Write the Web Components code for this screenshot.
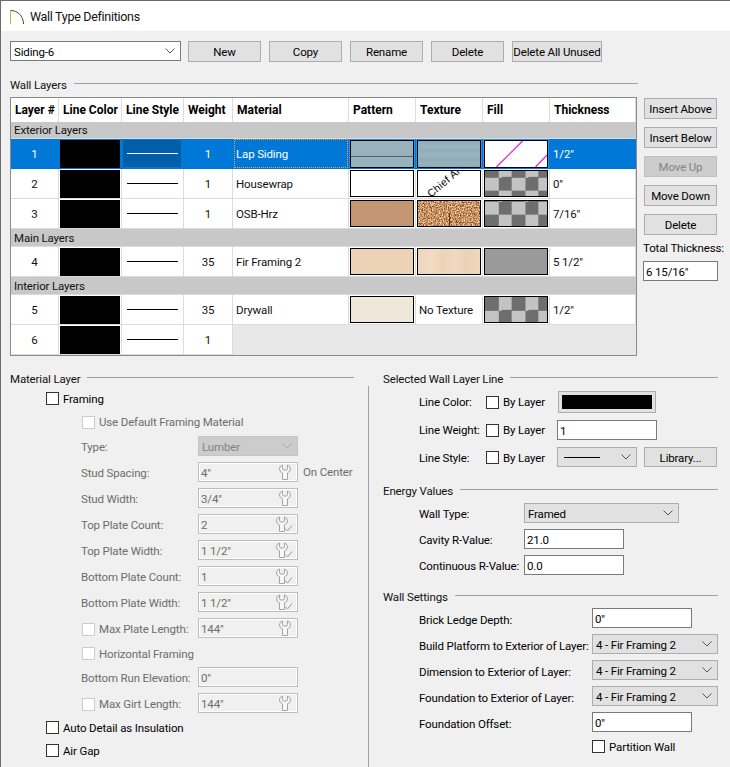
<!DOCTYPE html>
<html><head><meta charset="utf-8">
<style>
html,body{margin:0;padding:0;background:#f0f0f0;overflow:hidden}
body{font:11.5px/15px Roboto,"Liberation Sans",sans-serif;letter-spacing:-.15px;color:#000}
</style></head><body>
<wt-window>
  <wt-titlebar slot="title">Wall Type Definitions</wt-titlebar>
  <wt-toolbar slot="toolbar">
    <wt-select variant="white" w="171" text="Siding-6"></wt-select>
    <wt-button w="73">New</wt-button><wt-button w="73">Copy</wt-button><wt-button w="73">Rename</wt-button><wt-button w="73">Delete</wt-button><wt-button w="90">Delete All Unused</wt-button>
  </wt-toolbar>
  <wt-group slot="layers-head" label="Wall Layers"></wt-group>
  <wt-layer-table slot="table"></wt-layer-table>
  <wt-side slot="side">
    <wt-button w="73" h="21">Insert Above</wt-button>
    <wt-button w="73" h="21">Insert Below</wt-button>
    <wt-button w="73" h="21" disabled>Move Up</wt-button>
    <wt-button w="73" h="21">Move Down</wt-button>
    <wt-button w="73" h="21">Delete</wt-button>
    <span slot="total" style="white-space:nowrap">Total Thickness:</span>
    <wt-input slot="total" w="75" value='6 15/16"'></wt-input>
  </wt-side>
  <wt-material slot="left"></wt-material>
  <wt-right slot="right"></wt-right>
</wt-window>
<script>
function def(name, css, html, init){
  customElements.define(name, class extends HTMLElement{
    constructor(){super();const r=this.attachShadow({mode:'open'});r.innerHTML='<style>'+css+'</style>'+(typeof html==='function'?html(this):html);}
    connectedCallback(){ if(init&&!this._i){this._i=1;init(this);} }
  });
}
const chev=c=>`<svg width="10" height="6" viewBox="0 0 10 6"><path d="M.5 .5 5 5 9.500 .5" fill="none" stroke="${c}"/></svg>`;
const WR='M3.500 1v3.600Q3.500 6 5 6H7Q8.500 6 8.500 4.600V1Q11.500 2 11.500 5Q11.500 7.800 8.500 8.800V15.500H3.500V8.800Q.5 7.800 .5 5Q.5 2 3.500 1Z';

def('wt-window',`:host{display:block;width:730px;height:767px;box-sizing:border-box;border-left:1px solid #6b6b6b;border-top:1px solid #6b6b6b;background:#f0f0f0;overflow:hidden}
.top{padding:10px 0 0 9px}.head{margin-top:15px;padding-right:92px}
.mid{display:flex;gap:6px;margin-top:4px;padding-left:9px}
.low{display:grid;grid-template-columns:367px 1fr;margin-top:15px;height:396px}`,
`<slot name="title"></slot><div class="top"><slot name="toolbar"></slot><div class="head"><slot name="layers-head"></slot></div></div>
<div class="mid"><slot name="table"></slot><slot name="side"></slot></div>
<div class="low"><slot name="left"></slot><slot name="right"></slot></div>`);

def('wt-titlebar',`:host{display:flex;align-items:center;gap:5px;height:30px;background:#fff;padding-left:9px;font-size:12.500px;letter-spacing:-.3px;color:#111}
svg{display:block;margin-top:1px}`,
`<svg width="15" height="16" viewBox="0 0 15 16"><path d="M1 1.500C7.500 1.500 13.500 7 13.500 15" fill="none" stroke="#444"/><path d="M.5 1V15" stroke="#a8c83c" fill="none"/></svg><slot></slot>`);

def('wt-toolbar',`:host{display:flex;gap:8px;align-items:flex-start;height:21px}::slotted(wt-select){margin-right:-1px}`,`<slot></slot>`);

def('wt-button',`:host{display:inline-flex;align-items:center;justify-content:center;box-sizing:border-box;height:var(--h,21px);width:var(--w,73px);background:#e1e1e1;border:1px solid #adadad;white-space:nowrap;flex:none;padding-top:2px}
:host([disabled]){background:#cdcdcd;border-color:#c0c0c0;color:#838383}`,`<slot></slot>`,
e=>{e.style.setProperty('--w',(e.getAttribute('w')||73)+'px');e.style.setProperty('--h',(e.getAttribute('h')||21)+'px');});

def('wt-select',`:host{display:flex;align-items:center;justify-content:space-between;box-sizing:border-box;height:20px;background:#e1e1e1;border:1px solid #adadad;padding:0 5px 0 3px;white-space:nowrap;flex:none}
:host([variant=white]){background:#fff;border-color:#7a7a7a}
:host([disabled]){background:#cccccc;border-color:#c4c4c4;color:#838383}
span{padding-top:3px}
svg{display:block}`,
e=>`<span id="t"></span>`+chev(e.hasAttribute('disabled')?'#a8a8a8':'#555'),
e=>{e.shadowRoot.getElementById('t').textContent=e.getAttribute('text');e.style.width=e.getAttribute('w')+'px';});

def('wt-input',`:host{display:flex;align-items:center;justify-content:space-between;box-sizing:border-box;height:20px;background:#fff;border:1px solid #7a7a7a;padding:0 4px 0 2px;white-space:nowrap;flex:none;color:#000}
:host([disabled]){background:#f0f0f0;border-color:#bcbcbc;color:#6d6d6d;box-shadow:inset 0 0 0 1px #fff}
span{padding-top:3px}
svg{display:block;flex:none}`,
`<span id="t"></span><svg id="i" width="17" height="16" viewBox="0 0 17 16" style="display:none"></svg>`,
e=>{e.shadowRoot.getElementById('t').textContent=e.getAttribute('value');e.style.width=e.getAttribute('w')+'px';
 const k=e.getAttribute('icon');const s=e.shadowRoot.getElementById('i');
 if(k){s.style.display='block';
  s.innerHTML=k==='check'
   ?`<path d="${WR}" fill="#f7f7f7" stroke="#a4a4a4"/><path d="M9 12.500 11.500 15 16 9.500" fill="none" stroke="#9a9a9a"/>`
   :`<path d="${WR}" transform="translate(3 0)" fill="#f7f7f7" stroke="#a4a4a4"/>`;}
});

def('wt-check',`:host{display:inline-flex;align-items:center;gap:4px;white-space:nowrap;color:#000}
i{display:block;box-sizing:border-box;width:13px;height:13px;border:1px solid #333;background:#fff;flex:none}
span{padding-top:var(--tp,2px)}
:host([disabled]){color:#6d6d6d}:host([disabled]) i{border-color:#ccc}`,`<i></i><span><slot></slot></span>`);

def('wt-group',`:host{display:flex;height:16px;gap:7px;white-space:nowrap;color:#111}
i{display:block;flex:1;height:1px;background:#a0a0a0;margin-top:6px}span{line-height:16px}`,
e=>`<span id="l"></span><i></i>`,e=>{e.shadowRoot.getElementById('l').textContent=e.getAttribute('label');});

def('wt-side',`:host{display:flex;flex-direction:column;width:75px;padding-top:1px;flex:none}
.b{display:flex;flex-direction:column;gap:8px;padding-left:1px}.t{display:flex;flex-direction:column;gap:5px;margin-top:6px}`,
`<div class="b"><slot></slot></div><div class="t"><slot name="total"></slot></div>`);

def('wt-swatch',`:host{display:block;box-sizing:border-box;width:64px;height:27px;border:1px solid #000;overflow:hidden;position:relative;background:var(--bg,#fff)}
:host([sel]){height:28px}
.pat{position:absolute;inset:0}
.chk{background:conic-gradient(#c3c3c3 25%,#6e6e6e 0 50%,#c3c3c3 0 75%,#6e6e6e 0);background-size:26.660px 26.660px}
.siding{background:linear-gradient(#8fabb7,#9ab5c0 22%,#90adb9 38%,#9ab5c0 55%,#8eabb7 70%,#97b2bd 85%,#90adb9)}
.line{position:absolute;left:0;right:0;top:15px;height:1px;background:#5a5f63}
.wood{background:linear-gradient(90deg,#eed6bb,#f1dcc4 22%,#ecd3b6 40%,#f0dac2 60%,#ebd2b5 78%,#efd8bf)}
.ca{position:absolute;left:15px;top:16px;font:10.500px/13px "Liberation Sans",sans-serif;letter-spacing:.3px;transform:rotate(-40deg);transform-origin:left bottom;white-space:nowrap;color:#000}
.stem{position:absolute;left:31px;top:12px;width:1px;height:13px;background:#5c3417}
svg{position:absolute;left:0;top:0;display:block}`,
e=>{const k=e.getAttribute('kind');
 if(k==='chk')return `<div class="pat chk" style="background-position:0 ${e.getAttribute('off')||0}px"></div>`;
 if(k==='siding')return `<div class="pat siding"></div>`;
 if(k==='lap')return `<div class="line"></div>`;
 if(k==='wood')return `<div class="pat wood"></div>`;
 if(k==='ca')return `<div class="ca">Chief Arch</div>`;
 if(k==='magenta')return `<svg width="62" height="26"><path d="M11.500 26 37.500 0M50.500 26 63 13" stroke="#f010f0" stroke-width="1.200" fill="none"/></svg>`;
 if(k==='osb')return `<svg width="62" height="26"><filter id="n" x="0" y="0" width="100%" height="100%" color-interpolation-filters="sRGB"><feTurbulence type="fractalNoise" baseFrequency=".75" numOctaves="2" seed="4"/><feColorMatrix values="1.200 0 0 0 .18 1.200 0 0 0 -.03 1.200 0 0 0 -.2 0 0 0 0 1"/></filter><rect width="62" height="26" filter="url(#n)"/></svg><div class="stem"></div>`;
 return '';},
e=>{const b=e.getAttribute('bg');if(b)e.style.setProperty('--bg',b);});

const line=c=>`<span class="ln" style="background:${c}"></span>`;
const ROWS=[
 {t:'h',c:['Layer #','Line Color','Line Style','Weight','Material','Pattern','Texture','Fill','Thickness']},
 {t:'g',h:17,c:'Exterior Layers'},
 {n:1,w:1,m:'Lap Siding',sel:1,p:'kind="lap" bg="#97b2bd"',x:'kind="siding"',f:'kind="magenta"',th:'1/2"'},
 {n:2,w:1,m:'Housewrap',p:'',x:'kind="ca"',f:'kind="chk" off="-7"',th:'0"'},
 {n:3,w:1,m:'OSB-Hrz',p:'bg="#c49573"',x:'kind="osb"',f:'kind="chk" off="-13"',th:'7/16"'},
 {t:'g',h:18,c:'Main Layers'},
 {n:4,w:35,m:'Fir Framing 2',p:'bg="#edd3b5"',x:'kind="wood"',f:'bg="#9a9a9a"',th:'5 1/2"'},
 {t:'g',h:18,c:'Interior Layers'},
 {n:5,w:35,m:'Drywall',p:'bg="#efe8da"',x:null,f:'kind="chk" off="0"',th:'1/2"'},
 {n:6,w:1,empty:1}
];
def('wt-layer-table',`:host{display:block;box-sizing:border-box;width:627px;height:259px;border:1px solid #8a8a8a;background:#fff;flex:none}
.g{display:grid;grid-template-columns:48px 63px 62px 49px 116px 67px 67px 67px 86px;width:625px}
.c{box-sizing:border-box;height:30px;border-right:1px solid #dcdcdc;border-bottom:1px solid #dcdcdc;display:flex;align-items:center;white-space:nowrap;position:relative;padding:1px 0 0 3px;color:#111}
.c.ctr{justify-content:center;padding:1px 0 0}
.c.h{height:24px;border-bottom:0;font-size:12px;letter-spacing:0;font-weight:700;padding:1px 0 0 4px;background:#fff;color:#000}
.grp{grid-column:1/-1;background:#c8c8c8;border-bottom:1px solid #dcdcdc;padding:1px 0 0 3px;display:flex;align-items:center;color:#111;box-sizing:border-box}
.c.sw{padding:0 0 0 1px}
.c.blk{padding:0 0 0 1px}.blk b{display:block;width:60px;height:28px;background:#000}
.ln{display:block;width:51px;height:1px}
.c.st{justify-content:center;padding:0}
.sel{background:#0078d7;color:#fff;border-right-color:#0078d7;border-bottom-color:#0078d7}
.sel.sw{background:#2a93e6;border-right-color:#0078d7}
.sel .box{display:flex;align-items:center;justify-content:center;position:absolute;left:0;right:0;top:0;bottom:0;background:#005fa8;margin:1px 2px 1px 1px}
.foc{position:absolute;inset:0 0 0 1px;border:1px dotted #f2a04a;pointer-events:none}
.none{grid-column:5/-1;background:#e8e8e8;height:30px;border-bottom:1px solid #e8e8e8;box-sizing:border-box}`,
()=>{let o='<div class="g">';
 ROWS.forEach(r=>{
  if(r.t==='h'){r.c.forEach(x=>o+=`<div class="c h">${x}</div>`);return;}
  if(r.t==='g'){o+=`<div class="grp" style="height:${r.h}px">${r.c}</div>`;return;}
  const s=r.sel?' sel':'';const a=r.sel?' sel':'';
  o+=`<div class="c ctr${s}">${r.n}</div><div class="c blk${s}"><b></b></div>`;
  o+=r.sel?`<div class="c st${s}"><span class="box">${line('#fff')}</span></div>`:`<div class="c st">${line('#000')}</div>`;
  o+=`<div class="c ctr${s}">${r.w}</div>`;
  if(r.empty){o+='<div class="none"></div>';return;}
  o+=`<div class="c${s}">${r.m}${r.sel?'<span class="foc"></span>':''}</div>`;
  o+=`<div class="c sw${s}"><wt-swatch${a} ${r.p}></wt-swatch></div>`;
  o+=r.x===null?`<div class="c">No Texture</div>`:`<div class="c sw${s}"><wt-swatch${a} ${r.x}></wt-swatch></div>`;
  o+=`<div class="c sw${s}"><wt-swatch${a} ${r.f}></wt-swatch></div>`;
  o+=`<div class="c${s}">${r.th}</div>`;
 });
 return o+'</div>';});

def('wt-field',`:host{display:grid;grid-template-columns:var(--lw,117px) auto auto;justify-content:start;align-items:center;height:var(--rh,26px);padding-left:var(--pl,80px);align-content:start;white-space:nowrap}
.l,.c,.e{min-height:20px;display:flex;align-items:center}.l{padding-top:var(--tp,2px);box-sizing:border-box}.e{padding-left:var(--ex,5px)}`,
`<div class="l"><slot></slot></div><div class="c"><slot name="control"></slot></div><div class="e"><slot name="extra"></slot></div>`);

def('wt-material',`:host{display:block;padding-left:9px;box-sizing:border-box}
.head{padding-right:14px}
.f{margin:5px 0 0 36px;display:flex;height:13px}
.d{margin:11px 0 0 72px;display:flex;height:13px;--tp:0px}
.rows{margin-top:7px;color:#6d6d6d;margin-left:-9px;--pl:80px}
.hf{height:23px;padding-left:81px;display:flex;align-items:flex-start;padding-top:3px;box-sizing:border-box}
.hf wt-check{height:13px}
.bot{margin:2px 0 0 36px;display:flex;flex-direction:column;gap:10px}
.bot wt-check{height:13px}`,
()=>{
 const ctl=(v,ic)=>`<wt-input slot="control" disabled w="100" value='${v}' ${ic?`icon="${ic}"`:''}></wt-input>`;
 const chkF=(l,v,ic)=>`<wt-field><wt-check disabled style="margin-left:1px;--tp:0px">${l}</wt-check>${ctl(v,ic)}</wt-field>`;
 const fld=(l,v,ic,ex)=>`<wt-field>${l}${ctl(v,ic)}${ex?`<span slot="extra">${ex}</span>`:''}</wt-field>`;
 return `<div class="head"><wt-group label="Material Layer"></wt-group></div>
 <wt-check class="f">Framing</wt-check>
 <wt-check class="d" disabled>Use Default Framing Material</wt-check>
 <div class="rows">
  <wt-field>Type:<wt-select slot="control" disabled w="100" text="Lumber"></wt-select></wt-field>
  ${fld('Stud Spacing:','4"','w','On Center')}
  ${fld('Stud Width:','3/4"','w')}
  ${fld('Top Plate Count:','2','check')}
  ${fld('Top Plate Width:','1 1/2"','check')}
  ${fld('Bottom Plate Count:','1','check')}
  ${fld('Bottom Plate Width:','1 1/2"','check')}
  ${chkF('Max Plate Length:','144"','w')}
  <div class="hf"><wt-check disabled>Horizontal Framing</wt-check></div>
  ${fld('Bottom Run Elevation:','0"')}
  ${chkF('Max Girt Length:','144"','w')}
 </div>
 <div class="bot"><wt-check>Auto Detail as Insulation</wt-check><wt-check>Air Gap</wt-check></div>`;});

def('wt-right',`:host{display:flex;flex-direction:column;height:100%}
.hd{margin:0 12px 0 15px;flex:none}
.body{flex:1;border-left:1px solid #a0a0a0;margin-top:-1px}
.a{--pl:50px;--ex:0px;--tp:0px;padding-top:5px}
.a wt-field{--lw:67px}
.sw{box-sizing:border-box;width:98px;height:22px;border:1px solid #adadad;background:#e1e1e1;padding:3px;margin-left:1px}
.sw i{display:block;height:100%;background:#000}
.sec{margin:16px 12px 0 14px}
.e{--pl:50px;--lw:105px;padding-top:4px}
.s{--pl:50px;--lw:173px;--tp:4px;padding-top:3px}
.pw{margin:2px 0 0 223px;display:flex;height:13px;--tp:2px}`,
()=>`<div class="hd"><wt-group label="Selected Wall Layer Line"></wt-group></div>
<div class="body">
 <div class="a">
  <wt-field style="--rh:29px">Line Color:<wt-check slot="control" style="width:71px">By Layer</wt-check><div slot="extra"><div class="sw"><i></i></div></div></wt-field>
  <wt-field style="--rh:27px">Line Weight:<wt-check slot="control" style="width:71px">By Layer</wt-check><wt-input slot="extra" w="100" value="1"></wt-input></wt-field>
  <wt-field style="--rh:20px;--tp:2px">Line Style:<wt-check slot="control" style="width:71px">By Layer</wt-check><span slot="extra" style="display:flex;gap:7px"><wt-line-select></wt-line-select><wt-button w="73" h="20">Library...</wt-button></span></wt-field>
 </div>
 <div class="sec" style="margin-top:16px"><wt-group label="Energy Values"></wt-group></div>
 <div class="e">
  <wt-field>Wall Type:<wt-select slot="control" w="155" text="Framed"></wt-select></wt-field>
  <wt-field>Cavity R-Value:<wt-input slot="control" w="100" value="21.0"></wt-input></wt-field>
  <wt-field>Continuous R-Value:<wt-input slot="control" w="100" value="0.0"></wt-input></wt-field>
 </div>
 <div class="sec" style="margin-top:8px"><wt-group label="Wall Settings"></wt-group></div>
 <div class="s">
  <wt-field>Brick Ledge Depth:<wt-input slot="control" w="100" value='0"'></wt-input></wt-field>
  <wt-field>Build Platform to Exterior of Layer:<wt-select slot="control" w="126" text="4 - Fir Framing 2"></wt-select></wt-field>
  <wt-field>Dimension to Exterior of Layer:<wt-select slot="control" w="126" text="4 - Fir Framing 2"></wt-select></wt-field>
  <wt-field>Foundation to Exterior of Layer:<wt-select slot="control" w="126" text="4 - Fir Framing 2"></wt-select></wt-field>
  <wt-field>Foundation Offset:<wt-input slot="control" w="100" value='0"'></wt-input></wt-field>
  <wt-check class="pw">Partition Wall</wt-check>
 </div>
</div>`);

def('wt-line-select',`:host{display:flex;align-items:center;justify-content:space-between;box-sizing:border-box;width:80px;height:20px;background:#e1e1e1;border:1px solid #adadad;padding:0 5px 0 6px}
span{display:block;width:36px;height:1px;background:#000}`,`<span></span>`+chev('#555'));
</script>
</body></html>
